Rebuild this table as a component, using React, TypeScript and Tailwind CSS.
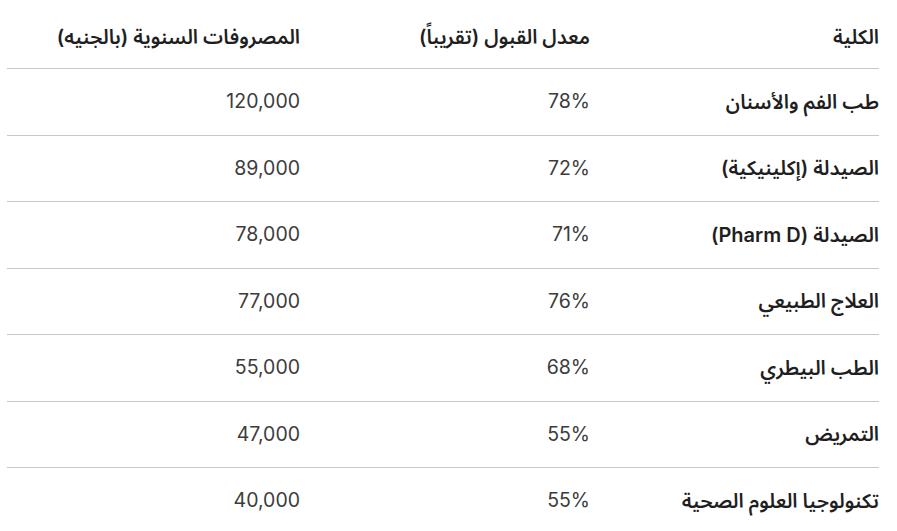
const rows = [
  { name: "طب الفم والأسنان", rate: "78%", fees: "120,000" },
  { name: "الصيدلة (إكلينيكية)", rate: "72%", fees: "89,000" },
  { name: "الصيدلة (Pharm D)", rate: "71%", fees: "78,000" },
  { name: "العلاج الطبيعي", rate: "76%", fees: "77,000" },
  { name: "الطب البيطري", rate: "68%", fees: "55,000" },
  { name: "التمريض", rate: "55%", fees: "47,000" },
  { name: "تكنولوجيا العلوم الصحية", rate: "55%", fees: "40,000" },
];

export default function App() {
  return (
    <div
      dir="rtl"
      className="w-[897px] h-[531px] overflow-hidden bg-white pl-[7px] pr-[18px] text-[#1f1f1f]"
      style={{ fontFamily: '"Inter", "Noto Sans Arabic", "Noto Sans", "DejaVu Sans", sans-serif' }}
    >
      {/* header */}
      <div className="grid grid-cols-[289px_290px_293px] h-[69px] pt-[6px] items-center border-b border-[#c7c7c7] text-[20px] font-semibold">
        <div>الكلية</div>
        <div>معدل القبول (تقريباً)</div>
        <div>المصروفات السنوية (بالجنيه)</div>
      </div>

      {rows.map((r) => (
        <div
          key={r.name}
          className="grid grid-cols-[289px_290px_293px] h-[66.5px] items-center border-b border-[#c7c7c7]"
        >
          <div className="text-[20px] font-semibold">{r.name}</div>
          <div className="text-[19.5px] text-[#3c3c3c]">{r.rate}</div>
          <div className="text-[19.5px] text-[#3c3c3c]">{r.fees}</div>
        </div>
      ))}
    </div>
  );
}
